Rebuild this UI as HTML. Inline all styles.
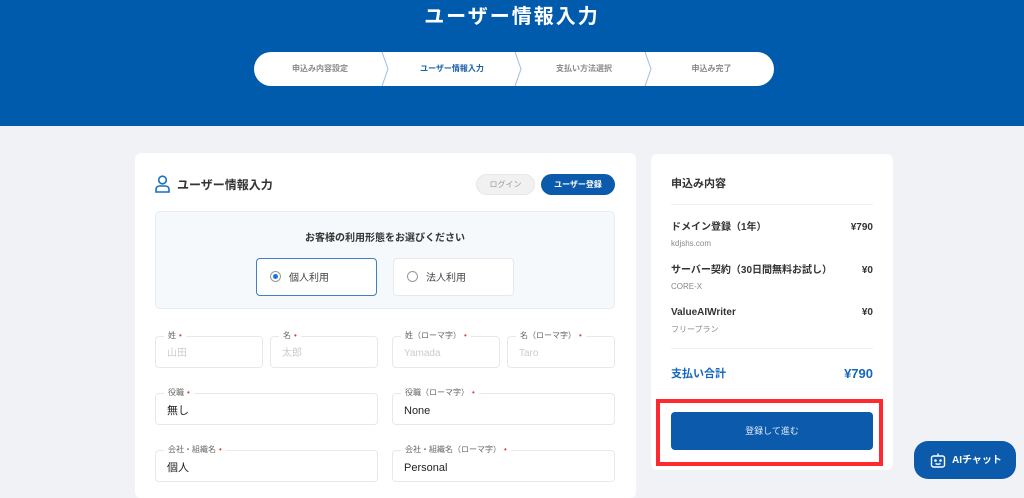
<!DOCTYPE html>
<html><head><meta charset="utf-8"><style>
*{box-sizing:border-box;margin:0;padding:0}
body{width:1024px;height:490px;overflow:hidden;background:#f0f2f5;font-family:"Liberation Sans","Noto Sans CJK JP",sans-serif;position:relative;color:#333}
.a{position:absolute}
.hdr{left:0;top:0;width:1024px;height:126px;background:#005bac}
.title{left:0;width:1024px;top:6px;line-height:22px;text-align:center;color:#fff;font-size:20px;font-weight:bold;letter-spacing:2px}
.step{top:52px;left:254px;width:520px;height:34px;background:#fff;border-radius:17px}
.st{top:0;height:34px;line-height:34px;font-size:8px;color:#888;text-align:center;font-weight:bold}
.card{background:#fff;border-radius:6px}
.fld{border:1px solid #e6e8eb;border-radius:4px;height:32px;background:#fff}
.lb{font-size:8px;color:#666;background:#fff;padding:0 4px;top:-6px;left:8px;line-height:10px}
.lb i{color:#e53935;font-style:normal;margin-left:3px}
.v{left:11px;top:10px;font-size:11px;color:#222;line-height:14px}
.ph{color:#ccc}
.it{font-size:10px;font-weight:bold;color:#333;line-height:12px}
.sub{font-size:8px;color:#888;line-height:10px}
</style></head><body>
<div class="a hdr"></div>
<div class="a title">ユーザー情報入力</div>
<div class="a step">
<svg class="a" style="left:0;top:0" width="520" height="34"><g fill="none" stroke="#9dbde0" stroke-width="1"><path d="M128 0 L134 17 L128 34"/><path d="M261 0 L267 17 L261 34"/><path d="M391 0 L397 17 L391 34"/></g></svg>
<div class="a st" style="left:0;width:132px">申込み内容設定</div>
<div class="a st" style="left:132px;width:132px;color:#1a5fa8">ユーザー情報入力</div>
<div class="a st" style="left:265px;width:130px">支払い方法選択</div>
<div class="a st" style="left:395px;width:125px">申込み完了</div>
</div>

<div class="a card" style="left:135px;top:153px;width:501px;height:345px">
<svg class="a" style="left:19px;top:22px" width="17" height="18" viewBox="0 0 17 18"><g fill="none" stroke="#1a6fc0" stroke-width="1.6"><circle cx="8.5" cy="5" r="3.8"/><path d="M2 17 V14.5 Q2 11 6 11 H11 Q15 11 15 14.5 V17 Z"/></g></svg>
<div class="a" style="left:42px;top:25px;font-size:12px;line-height:15px;font-weight:bold;color:#333">ユーザー情報入力</div>
<div class="a" style="left:341px;top:21px;width:59px;height:21px;border-radius:11px;background:#f1f1f1;border:1px solid #e6e6e6;font-size:8px;color:#999;text-align:center;line-height:19px">ログイン</div>
<div class="a" style="left:406px;top:21px;width:74px;height:21px;border-radius:11px;background:#0b5aab;font-size:8px;color:#fff;text-align:center;line-height:21px;font-weight:bold">ユーザー登録</div>
<div class="a" style="left:20px;top:58px;width:460px;height:98px;background:#f6f9fc;border:1px solid #e8ecf0;border-radius:5px">
<div class="a" style="left:0;width:458px;top:20px;line-height:13px;text-align:center;font-size:10px;font-weight:bold;color:#333">お客様の利用形態をお選びください</div>
<div class="a" style="left:100px;top:46px;width:121px;height:38px;border:1.5px solid #3f7fc4;border-radius:4px;background:#fff">
<div class="a" style="left:13px;top:12px;width:11px;height:11px;border:1px solid #999;border-radius:50%"></div>
<div class="a" style="left:16px;top:15px;width:5px;height:5px;background:#1a73e8;border-radius:50%"></div>
<div class="a" style="left:32px;top:13px;line-height:13px;font-size:10px;color:#444">個人利用</div></div>
<div class="a" style="left:237px;top:46px;width:121px;height:38px;border:1px solid #e6e8eb;border-radius:4px;background:#fff">
<div class="a" style="left:13px;top:12px;width:11px;height:11px;border:1px solid #999;border-radius:50%"></div>
<div class="a" style="left:32px;top:13px;line-height:13px;font-size:10px;color:#444">法人利用</div></div>
</div>

<div class="a fld" style="left:20px;top:183px;width:108px"><div class="a lb">姓<i>•</i></div><div class="a v ph" style="font-size:10px">山田</div></div>
<div class="a fld" style="left:135px;top:183px;width:108px"><div class="a lb">名<i>•</i></div><div class="a v ph" style="font-size:10px">太郎</div></div>
<div class="a fld" style="left:257px;top:183px;width:108px"><div class="a lb">姓（ローマ字）<i>•</i></div><div class="a v ph" style="font-size:10px">Yamada</div></div>
<div class="a fld" style="left:372px;top:183px;width:108px"><div class="a lb">名（ローマ字）<i>•</i></div><div class="a v ph" style="font-size:10px">Taro</div></div>
<div class="a fld" style="left:20px;top:240px;width:223px"><div class="a lb">役職<i>•</i></div><div class="a v">無し</div></div>
<div class="a fld" style="left:257px;top:240px;width:223px"><div class="a lb">役職（ローマ字）<i>•</i></div><div class="a v">None</div></div>
<div class="a fld" style="left:20px;top:297px;width:223px"><div class="a lb">会社・組織名<i>•</i></div><div class="a v">個人</div></div>
<div class="a fld" style="left:257px;top:297px;width:223px"><div class="a lb">会社・組織名（ローマ字）<i>•</i></div><div class="a v">Personal</div></div>
</div>

<div class="a card" style="left:651px;top:154px;width:242px;height:316px">
<div class="a" style="left:20px;top:23px;line-height:14px;font-size:11px;font-weight:bold;color:#333">申込み内容</div>
<div class="a" style="left:20px;top:50px;width:202px;height:1px;background:#eef0f2"></div>
<div class="a it" style="left:20px;top:68px">ドメイン登録（1年）</div><div class="a it" style="right:20px;top:68px">¥790</div>
<div class="a sub" style="left:20px;top:85px">kdjshs.com</div>
<div class="a it" style="left:20px;top:111px">サーバー契約（30日間無料お試し）</div><div class="a it" style="right:20px;top:111px">¥0</div>
<div class="a sub" style="left:20px;top:128px">CORE-X</div>
<div class="a it" style="left:20px;top:153px">ValueAIWriter</div><div class="a it" style="right:20px;top:153px">¥0</div>
<div class="a sub" style="left:20px;top:171px">フリープラン</div>
<div class="a" style="left:20px;top:194px;width:202px;height:1px;background:#eef0f2"></div>
<div class="a" style="left:20px;top:213px;line-height:14px;font-size:11px;font-weight:bold;color:#1467bd">支払い合計</div>
<div class="a" style="right:20px;top:212px;line-height:16px;font-size:13px;font-weight:bold;color:#1467bd">¥790</div>
</div>
<div class="a" style="left:656px;top:399px;width:227px;height:67px;border:4px solid #ff2a2f"></div>
<div class="a" style="left:671px;top:412px;width:202px;height:38px;background:#0b5aab;border-radius:4px;color:#dce8f5;font-size:9px;text-align:center;line-height:38px">登録して進む</div>

<div class="a" style="left:914px;top:441px;width:102px;height:38px;background:#0b5aab;border-radius:14px">
<svg class="a" style="left:16px;top:11px" width="16" height="17" viewBox="0 0 16 17"><g fill="none" stroke="#fff" stroke-width="1.4"><rect x="1.5" y="4" width="13" height="11" rx="2"/><path d="M8 4V1.5"/><circle cx="5.5" cy="8.5" r=".6" fill="#fff"/><circle cx="10.5" cy="8.5" r=".6" fill="#fff"/><path d="M5.5 11.5 Q8 13 10.5 11.5"/></g></svg>
<div class="a" style="left:38px;top:14px;line-height:12px;font-size:10px;font-weight:bold;color:#fff">AIチャット</div>
</div>
</body></html>
